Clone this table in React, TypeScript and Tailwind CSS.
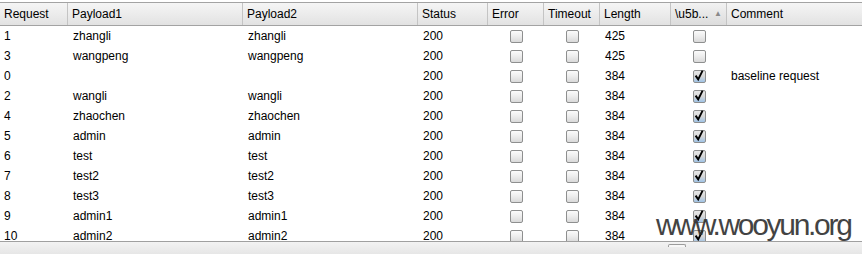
import React from "react";

type Row = {
  id: string;
  p1: string;
  p2: string;
  status: string;
  length: string;
  flag: boolean;
  comment?: string;
};

const rows: Row[] = [
  { id: "1", p1: "zhangli", p2: "zhangli", status: "200", length: "425", flag: false },
  { id: "3", p1: "wangpeng", p2: "wangpeng", status: "200", length: "425", flag: false },
  { id: "0", p1: "", p2: "", status: "200", length: "384", flag: true, comment: "baseline request" },
  { id: "2", p1: "wangli", p2: "wangli", status: "200", length: "384", flag: true },
  { id: "4", p1: "zhaochen", p2: "zhaochen", status: "200", length: "384", flag: true },
  { id: "5", p1: "admin", p2: "admin", status: "200", length: "384", flag: true },
  { id: "6", p1: "test", p2: "test", status: "200", length: "384", flag: true },
  { id: "7", p1: "test2", p2: "test2", status: "200", length: "384", flag: true },
  { id: "8", p1: "test3", p2: "test3", status: "200", length: "384", flag: true },
  { id: "9", p1: "admin1", p2: "admin1", status: "200", length: "384", flag: true },
  { id: "10", p1: "admin2", p2: "admin2", status: "200", length: "384", flag: true },
];

const cols = "grid grid-cols-[68px_175px_175px_70px_56px_56px_71px_56px_1fr]";

function Box({ checked }: { checked: boolean }) {
  return (
    <div className="flex h-full items-center justify-center">
      <div
        className={
          "relative h-[13px] w-[13px] rounded-[2px] border border-[#8e8f8f] " +
          (checked
            ? "bg-gradient-to-b from-[#e8e8e8] via-[#d6d6d6] to-[#9fc3e6]"
            : "bg-gradient-to-b from-[#fbfbfb] via-[#ececec] to-[#d9d9d9]")
        }
      >
        {checked && (
          <svg viewBox="0 0 13 13" className="absolute left-[-1px] top-[-2px] h-[13px] w-[13px]">
            <path d="M2.6 6.6 L5.2 10.4 L9.6 1.6" fill="none" stroke="#000" strokeWidth="1.9" strokeLinejoin="miter" />
          </svg>
        )}
      </div>
    </div>
  );
}

function Head({ label, sorted }: { label: string; sorted?: boolean }) {
  return (
    <div
      className={
        "flex items-center justify-between border-r border-[#c4c4c4] pl-[4px] pr-[4px] " +
        (sorted
          ? "bg-gradient-to-b from-[#f2f2f2] to-[#dcdcdc]"
          : "")
      }
    >
      <span>{label}</span>
      {sorted && <span className="text-[8px] text-[#8a8a8a]">▲</span>}
    </div>
  );
}

export default function App() {
  return (
    <div
      className="relative h-[254px] w-[862px] overflow-hidden bg-white pt-[2px] text-[12px] text-black"
      style={{ fontFamily: '"Liberation Sans", Arial, sans-serif' }}
    >
      <div className={cols + " h-[24px] border-y border-[#a3a3a3] bg-gradient-to-b from-[#f5f5f5] via-[#ececec] to-[#e2e2e2] leading-[22px]"}>
        <Head label="Request" />
        <Head label="Payload1" />
        <Head label="Payload2" />
        <Head label="Status" />
        <Head label="Error" />
        <Head label="Timeout" />
        <Head label="Length" />
        <Head label="\u5b..." sorted />
        <div className="pl-[4px]">Comment</div>
      </div>

      <div className="h-[215px] overflow-hidden">
        {rows.map((r) => (
          <div key={r.id} className={cols + " h-[20px] leading-[20px]"}>
            <div className="pl-[4px]">{r.id}</div>
            <div className="pl-[5px]">{r.p1}</div>
            <div className="pl-[5px]">{r.p2}</div>
            <div className="pl-[5px]">{r.status}</div>
            <Box checked={false} />
            <Box checked={false} />
            <div className="pl-[5px]">{r.length}</div>
            <Box checked={r.flag} />
            <div className="pl-[4px]">{r.comment ?? ""}</div>
          </div>
        ))}
      </div>

      <div className="h-[13px] border-t border-[#a0a0a0] bg-gradient-to-b from-[#f3f3f3] to-[#e6e6e6] pl-[668px] pt-[2px]">
        <div className="h-[3px] w-[18px] rounded-t-[2px] border-x border-t border-[#9c9c9c] bg-[#f8f8f8]" />
      </div>

      <div
        className="absolute left-[656px] top-[210px] text-[30px] leading-[30px] tracking-[-2.3px] text-[#2f2f2f] opacity-90"
        style={{ fontFamily: '"Liberation Sans", Arial, sans-serif' }}
      >
        www.wooyun.org
      </div>
    </div>
  );
}
